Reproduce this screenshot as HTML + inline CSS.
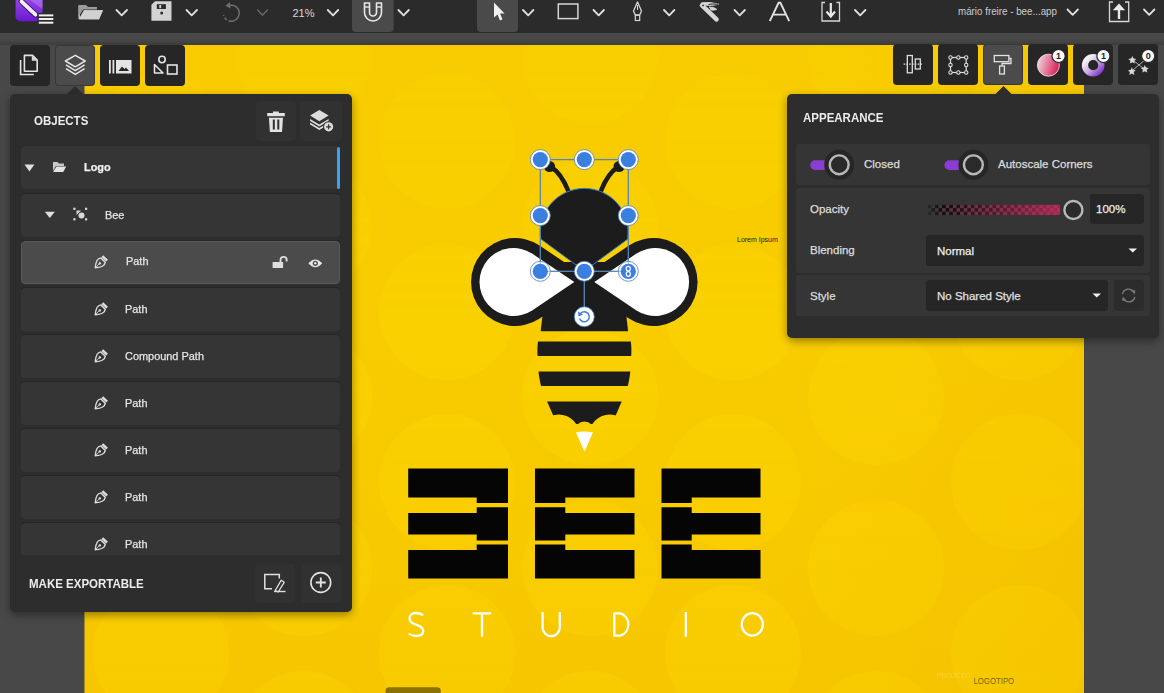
<!DOCTYPE html>
<html><head><meta charset="utf-8">
<style>
*{margin:0;padding:0;box-sizing:border-box}
html,body{width:1164px;height:693px;overflow:hidden;background:#484848;font-family:"Liberation Sans",sans-serif;position:relative}
.abs{position:absolute}
#toolbar{left:0;top:0;width:1164px;height:33px;background:#2b2b2b}
#canvas{left:84.5px;top:45px;width:999px;height:649px;background:#f6c800;overflow:hidden}
svg{position:absolute;left:0;top:0}
.panel{background:#2d2d2d;border-radius:5px;box-shadow:0 3px 9px rgba(0,0,0,.4)}
.btn{width:40px;height:41px;background:#262626;border-radius:4px}
.btn.on{background:#4b4b4b;box-shadow:inset 0 0 0 1px rgba(0,0,0,.25)}
.row{left:21px;width:319px;height:43px;background:#353535;box-shadow:0 -1px 0 #262626;border-radius:4px;color:#e6e6e6;font-size:11.5px}
.row span{position:absolute;top:15px;transform:scaleX(.95);transform-origin:0 0;white-space:nowrap;-webkit-text-stroke:.25px currentColor}
.hdr{color:#ececec;font-weight:bold;font-size:12.5px;transform:scaleX(.92);transform-origin:0 0;white-space:nowrap}
.lbl{color:#dedede;font-size:11.5px;white-space:nowrap;-webkit-text-stroke:.25px currentColor}
</style></head><body>

<div class="abs" style="left:0;top:33px;width:1164px;height:12px;background:linear-gradient(#4a4a4a,#474747 60%,#3c3c3c)"></div>
<div id="toolbar" class="abs"></div>
<div id="canvas" class="abs"></div>

<!-- canvas art, page coordinates -->
<svg width="1164" height="693" viewBox="0 0 1164 693">
  <defs>
    <clipPath id="cv"><rect x="84.5" y="45" width="999.5" height="649"/></clipPath>
    <clipPath id="bodyc"><ellipse cx="584.5" cy="350" rx="47" ry="88"/></clipPath>
  </defs>
  <g clip-path="url(#cv)">
    <!-- bokeh -->
    <defs>
      <linearGradient id="vig" x1="0" y1="0" x2="1" y2="0">
        <stop offset="0" stop-color="#e8a800" stop-opacity="0.0"/>
        <stop offset="0.7" stop-color="#e8a800" stop-opacity="0.0"/>
        <stop offset="1" stop-color="#e8a800" stop-opacity="0.14"/>
      </linearGradient>
      <linearGradient id="bokg" x1="0" y1="0" x2="0" y2="1">
        <stop offset="0" stop-color="#fff" stop-opacity=".45"/>
        <stop offset=".5" stop-color="#fff" stop-opacity=".8"/>
        <stop offset="1" stop-color="#fff" stop-opacity="1"/>
      </linearGradient>
      <mask id="bokm" maskUnits="userSpaceOnUse" x="84" y="44" width="1000" height="649"><rect x="84" y="44" width="1000" height="649" fill="url(#bokg)"/></mask>
      <linearGradient id="vig2" x1="0" y1="0" x2="0" y2="1">
        <stop offset="0" stop-color="#e8a000" stop-opacity="0"/>
        <stop offset="0.45" stop-color="#e8a000" stop-opacity="0"/>
        <stop offset="1" stop-color="#e8a000" stop-opacity="0.12"/>
      </linearGradient>
    </defs>
    <rect x="84" y="44" width="1000" height="649" fill="#f8cc00"/>
    <g fill="#fad100" mask="url(#bokm)"><circle cx="161" cy="141" r="68"/><circle cx="161" cy="312" r="68"/><circle cx="161" cy="482" r="68"/><circle cx="161" cy="653" r="68"/><circle cx="447" cy="141" r="68"/><circle cx="447" cy="312" r="68"/><circle cx="447" cy="482" r="68"/><circle cx="447" cy="653" r="68"/><circle cx="733" cy="141" r="68"/><circle cx="733" cy="312" r="68"/><circle cx="733" cy="482" r="68"/><circle cx="733" cy="653" r="68"/><circle cx="1019" cy="141" r="68"/><circle cx="1019" cy="312" r="68"/><circle cx="1019" cy="482" r="68"/><circle cx="1019" cy="653" r="68"/><circle cx="18" cy="56" r="68"/><circle cx="18" cy="227" r="68"/><circle cx="18" cy="397" r="68"/><circle cx="18" cy="568" r="68"/><circle cx="18" cy="739" r="68"/><circle cx="304" cy="56" r="68"/><circle cx="304" cy="227" r="68"/><circle cx="304" cy="397" r="68"/><circle cx="304" cy="568" r="68"/><circle cx="304" cy="739" r="68"/><circle cx="590" cy="56" r="68"/><circle cx="590" cy="227" r="68"/><circle cx="590" cy="397" r="68"/><circle cx="590" cy="568" r="68"/><circle cx="590" cy="739" r="68"/><circle cx="876" cy="56" r="68"/><circle cx="876" cy="227" r="68"/><circle cx="876" cy="397" r="68"/><circle cx="876" cy="568" r="68"/><circle cx="876" cy="739" r="68"/></g>
    <rect x="84" y="44" width="1000" height="649" fill="url(#vig)"/>
    <rect x="84" y="44" width="1000" height="649" fill="url(#vig2)"/>
    <!-- BEE letters -->
    <path fill="#050505" d="M408.2,468.5 H508.0 V503 H476.7 V497.5 H408.2 Z M476.7,507.3 H508.0 V540.6 H476.7 V534.5 H408.2 V513 H476.7 Z M476.7,544.4 H508.0 V578.5 H408.2 V550 H476.7 Z M535,468.5 H634.5 V497.5 H565.3 V503 H535 Z M535,507.3 H565.3 V513 H634.5 V534.5 H565.3 V540.6 H535 Z M535,544.4 H565.3 V550 H634.5 V578.5 H535 Z M661.5,468.5 H760.5 V497.5 H691.7 V503 H661.5 Z M661.5,507.3 H691.7 V513 H760.5 V534.5 H691.7 V540.6 H661.5 Z M661.5,544.4 H691.7 V550 H760.5 V578.5 H661.5 Z "/>
    <!-- STUDIO -->
    <g fill="none" stroke="#fff" stroke-width="2.3">
      <path d="M423,615.5 C421,613.5 418.5,613 416,613 C411.5,613 409.5,615.8 409.5,618.5 C409.5,622.5 413,623.8 416.5,624.8 C420.5,626 423.2,627.5 423.2,631 C423.2,634.5 420.3,636 416,636 C413,636 410.5,635 408.8,633.5"/>
      <path d="M472.7,613.3 H491.2 M482,613.3 V636.7"/>
      <path d="M542.6,612 V627.5 A8.6,8.6 0 0 0 559.8,627.5 V612"/>
      <path d="M614.3,613.4 H620.5 A11.5,11.7 0 0 1 620.5,635.6 H614.3 Z"/>
      <path d="M685.8,612 V636.7"/>
      <ellipse cx="752.3" cy="624.4" rx="10.6" ry="11.2"/>
    </g>
    <!-- bee body -->
    <defs>
      <mask id="scal" maskUnits="userSpaceOnUse" x="530" y="395" width="110" height="40">
        <rect x="530" y="395" width="110" height="40" fill="#fff"/>
        <circle cx="558.75" cy="435" r="20.6" fill="#000"/>
        <circle cx="609.85" cy="435" r="20.6" fill="#000"/>
        <circle cx="584.4" cy="431.6" r="10" fill="#000"/>
      </mask>
    </defs>
    <g fill="#1c1c1c">
      <path d="M548.5,262 H620.3 L628.1,331.2 H540.7 Z"/>
      <path d="M538,341.6 C537.3,347 537.3,351 537.6,355.9 H631.2 C631.5,351 631.5,347 630.8,341.6 Z"/>
      <path d="M538.5,371.6 C539,377 539.8,381 541,385.9 H627.8 C629,381 629.8,377 630.3,371.6 Z"/>
      <path mask="url(#scal)" d="M547.1,401.6 H621.7 L612,424 H557 Z"/>
    </g>
    <path fill="#fff" d="M575.9,432.3 Q584.5,430.8 593,432.3 L585.3,450 Q584.5,451.5 583.7,450 Z"/>
    <!-- wings -->
    <g fill="#1c1c1c">
      <path d="M593.7,282 L539.6,245.5 A44,44 0 1 0 539.6,318.5 Z"/>
      <path d="M574.9,282 L629,245.5 A44,44 0 1 1 629,318.5 Z"/>
    </g>
    <g fill="#fff">
      <path d="M574.3,282 L532.5,253.8 A34,34 0 1 0 532.5,310.2 Z"/>
      <path d="M594.3,282 L636.1,253.8 A34,34 0 1 1 636.1,310.2 Z"/>
    </g>
    <!-- head -->
    <g stroke="#1c1c1c" stroke-width="4.6" fill="none" stroke-linecap="round">
      <path d="M568.3,191 Q561,173 551,167"/>
      <path d="M600.9,191 Q608,173 618,167"/>
    </g>
    <circle cx="549.5" cy="166.5" r="5.6" fill="#1c1c1c"/>
    <circle cx="619.1" cy="166.5" r="5.6" fill="#1c1c1c"/>
    <path fill="#1c1c1c" stroke="#3b78c8" stroke-width="1" d="M540.8,239 A44,44 0 1 1 627.8,239 L584.3,271 Z"/>
    <!-- selection -->
    <g stroke="#5a86b0" stroke-width="1.3" fill="none">
      <rect x="540.3" y="159.6" width="88" height="111.7"/>
      <line x1="584.3" y1="271.3" x2="584.3" y2="316.7"/>
    </g>
    <g>
      <g fill="#fff" stroke="#4a7fc0" stroke-width="0.8">
        <circle cx="540.3" cy="159.6" r="10"/>
        <circle cx="584.3" cy="159.6" r="10"/>
        <circle cx="628.3" cy="159.6" r="10"/>
        <circle cx="540.3" cy="215.6" r="10"/>
        <circle cx="628.3" cy="215.6" r="10"/>
        <circle cx="584.3" cy="271.3" r="10"/>
        <circle cx="584.3" cy="316.7" r="10"/>
      </g>
      <g fill="#fff" fill-opacity=".55" stroke="#4a7fc0" stroke-width="0.8">
        <circle cx="540.3" cy="271.3" r="10"/>
        <circle cx="628.3" cy="271.3" r="10"/>
      </g>
      <g fill="#3b7fe0">
        <circle cx="540.3" cy="159.6" r="7.6"/>
        <circle cx="584.3" cy="159.6" r="7.6"/>
        <circle cx="628.3" cy="159.6" r="7.6"/>
        <circle cx="540.3" cy="215.6" r="7.6"/>
        <circle cx="628.3" cy="215.6" r="7.6"/>
        <circle cx="584.3" cy="271.3" r="7.6"/>
        <circle cx="540.3" cy="271.3" r="7.6"/>
        <circle cx="628.3" cy="271.3" r="7.6"/>
      </g>
    </g>
    <g fill="none" stroke="#3b7fe0" stroke-width="1.5">
      <path d="M580.5,313.5 A5,5 0 1 1 579.6,318.5"/>
    </g>
    <path d="M578,311.5 L578.5,316.5 L583,314.5 Z" fill="#3b7fe0"/>
    <g fill="none" stroke="#fff" stroke-width="1.2">
      <rect x="626.3" y="266.3" width="4" height="4.6" rx="2"/>
      <rect x="626.3" y="271.7" width="4" height="4.6" rx="2"/>
    </g>
    <text x="936.5" y="678.5" font-size="8" fill="#fbe070" font-family="Liberation Sans" opacity=".45" transform="translate(936.5 0) scale(.9 1) translate(-936.5 0)">PROJETO</text>
    <text x="973.5" y="684.3" font-size="8.2" fill="#76661c" font-family="Liberation Sans" transform="translate(973.5 0) scale(.95 1) translate(-973.5 0)">LOGOTIPO</text>
    <path d="M385.5,693 V691 Q385.5,687.3 389.5,687.3 H436.8 Q440.8,687.3 440.8,691 V693 Z" fill="#4a3c00" opacity=".62"/>
    <text x="737" y="242" font-size="7" fill="#222" font-family="Liberation Sans">Lorem Ipsum</text>
  </g>
</svg>


<!-- ===== TOOLBAR ICONS ===== -->
<svg width="1164" height="40" viewBox="0 0 1164 40" style="z-index:2">
  <!-- app icon -->
  <defs>
    <linearGradient id="appg" x1="0" y1="0" x2="0" y2="1">
      <stop offset="0" stop-color="#a050e8"/><stop offset="1" stop-color="#6a1ad0"/>
    </linearGradient>
  </defs>
  <rect x="15.6" y="-6" width="26.9" height="27.2" rx="5" fill="url(#appg)"/>
  <path d="M27,-2 H42.5 V9 Z" fill="#b27cf2" opacity=".55"/>
  <path d="M21.5,1.5 L35.5,14.7" stroke="#3a0c6a" stroke-width="5.6" stroke-linecap="round"/>
  <path d="M21.5,1.5 L35.5,14.7" stroke="#f4eefa" stroke-width="3.8" stroke-linecap="round"/>
  <rect x="37.3" y="13" width="18" height="12" fill="#2b2b2b"/>
  <g fill="#f0f0f0"><rect x="38.8" y="14.4" width="14.5" height="2"/><rect x="38.8" y="18" width="14.5" height="2"/><rect x="38.8" y="21.7" width="14.5" height="2"/></g>
  <!-- folder -->
  <path d="M78.5,6 L78.5,19 L99,19 L103,10 L84,10 L80,17 L80,6 Z" fill="#bdbdbd"/>
  <path d="M78.5,5 L86,5 L88,7 L97,7 L97,9.5 L83,9.5 L78.5,17 Z" fill="#9c9c9c"/>
  <path d="M84,10.5 L103,10.5 L99,19.5 L79,19.5 Z" fill="#d0d0d0"/>
  <!-- chevrons -->
  <g fill="none" stroke="#e0e0e0" stroke-width="1.8" stroke-linecap="round" stroke-linejoin="round">
    <path d="M116.5,10 L121.7,15.3 L127,10"/>
    <path d="M186.5,10 L191.7,15.3 L197,10"/>
    <path d="M327.8,10 L333,15.3 L338.2,10"/>
    <path d="M398.4,10 L403.6,15.3 L408.8,10"/>
    <path d="M523,10 L528.2,15.3 L533.4,10"/>
    <path d="M593.5,10 L598.7,15.3 L603.9,10"/>
    <path d="M664,10 L669.2,15.3 L674.4,10"/>
    <path d="M734.5,10 L739.7,15.3 L744.9,10"/>
    <path d="M855,10 L860.2,15.3 L865.4,10"/>
    <path d="M1067.5,9.5 L1072.7,14.8 L1077.9,9.5"/>
    <path d="M1144,9.5 L1149.2,14.8 L1154.4,9.5"/>
  </g>
  <path d="M257.6,10 L262.5,15 L267.4,10" fill="none" stroke="#6a6a6a" stroke-width="1.4" stroke-linecap="round"/>
  <!-- save -->
  <path d="M155,1.2 H171.5 V20.7 H151.4 V4.8 Z" fill="#d2d2d2"/>
  <rect x="156.8" y="4.2" width="9.1" height="4.8" fill="#2b2b2b"/>
  <rect x="159.3" y="5" width="1.8" height="3.2" fill="#d2d2d2"/>
  <circle cx="161.7" cy="13" r="1.5" fill="#2b2b2b"/>
  <!-- undo (dim) -->
  <path d="M229,5.5 A8,8 0 1 1 223.5,15" fill="none" stroke="#6e6e6e" stroke-width="1.5" stroke-dasharray="30 2 3 2 3"/>
  <path d="M230,2 L225.5,5.8 L230.5,8.5 Z" fill="#6e6e6e"/>
  <text x="292.5" y="17.3" font-size="11" fill="#d8d8d8" font-family="Liberation Sans">21%</text>
  <!-- magnet button -->
  <path d="M352,0 L393.6,0 L393.6,28 Q393.6,32 389.6,32 L356,32 Q352,32 352,28 Z" fill="#4a4a4a"/>
  <path d="M364.5,3 L364.5,12.5 A8.5,8.5 0 0 0 381.5,12.5 L381.5,3 L376.5,3 L376.5,12.5 A3.5,3.5 0 0 1 369.5,12.5 L369.5,3 Z" fill="none" stroke="#e8e8e8" stroke-width="1.6" stroke-linejoin="round"/>
  <line x1="364.5" y1="7" x2="369.5" y2="7" stroke="#e8e8e8" stroke-width="1.4"/>
  <line x1="376.5" y1="7" x2="381.5" y2="7" stroke="#e8e8e8" stroke-width="1.4"/>
  <!-- move tool button -->
  <path d="M477,0 L518,0 L518,28 Q518,32 514,32 L481,32 Q477,32 477,28 Z" fill="#4a4a4a"/>
  <path d="M494,2.5 L494,17.5 L497.5,14.5 L500,20.5 L502.5,19.3 L500,13.5 L504.5,13.5 Z" fill="#f0f0f0"/>
  <!-- rectangle -->
  <rect x="558.3" y="4" width="19.6" height="14.6" fill="none" stroke="#d6d6d6" stroke-width="1.5"/>
  <!-- pen -->
  <path d="M637.5,2 L641.5,11 L639.8,14.8 L635.2,14.8 L633.5,11 Z" fill="none" stroke="#d6d6d6" stroke-width="1.3" stroke-linejoin="round"/>
  <line x1="637.5" y1="5" x2="637.5" y2="10" stroke="#d6d6d6" stroke-width="1"/>
  <rect x="635.3" y="15.3" width="4.4" height="5.2" fill="none" stroke="#d6d6d6" stroke-width="1.2"/>
  <!-- brush -->
  <path d="M702,5.3 L716.5,19.3" stroke="#d6d6d6" stroke-width="4.6" stroke-linecap="round"/>
  <circle cx="703" cy="5.4" r="0.9" fill="#2b2b2b"/>
  <path d="M701.5,2.8 Q710,1.5 719,4.3 Q711,6.2 704.5,5" fill="#d6d6d6" stroke="#d6d6d6" stroke-width="1"/>
  <path d="M708.5,4.5 Q711,3.6 718.5,4.3" fill="none" stroke="#2b2b2b" stroke-width="1"/>
  <path d="M709,7 Q714,6.8 716.8,9.4 Q713,10.8 710.5,9.8" fill="#d6d6d6" stroke="#d6d6d6" stroke-width="0.9"/>
  <!-- text A -->
  <path d="M769.8,21.2 L778.6,2.8 L780.4,2.8 L789.2,21.2 M773.3,14.6 L785.7,14.6" fill="none" stroke="#e2e2e2" stroke-width="1.9"/>
  <!-- import -->
  <path d="M825,2.5 L822,2.5 L822,21 L839.5,21 L839.5,2.5 L836.5,2.5" fill="none" stroke="#d6d6d6" stroke-width="1.3"/>
  <path d="M830.8,3 L830.8,15" stroke="#eaeaea" stroke-width="2.2"/>
  <path d="M826.5,11.5 L830.8,16.5 L835,11.5" fill="none" stroke="#eaeaea" stroke-width="2.2"/>
  <text x="958" y="15" font-size="11" fill="#cfcfcf" font-family="Liberation Sans" transform="translate(958 0) scale(.89 1) translate(-958 0)">mário freire - bee...app</text>
  <!-- export -->
  <path d="M1113,2 L1109.5,2 L1109.5,21.5 L1128.7,21.5 L1128.7,2 L1125,2" fill="none" stroke="#d6d6d6" stroke-width="1.3"/>
  <path d="M1119,7 L1119,19" stroke="#eaeaea" stroke-width="2.4"/>
  <path d="M1114.5,9.5 L1119,4.5 L1123.5,9.5 Z" fill="#eaeaea" stroke="#eaeaea" stroke-width="1.4"/>
</svg>


<!-- ===== LEFT TOOL BUTTONS ===== -->
<div class="abs btn" style="left:10px;top:45px"></div>
<div class="abs btn on" style="left:55px;top:45px"></div>
<div class="abs btn" style="left:100px;top:45px"></div>
<div class="abs btn" style="left:145px;top:45px"></div>
<svg width="200" height="100" viewBox="0 0 200 100" style="z-index:3">
  <!-- pages icon -->
  <path d="M20.6,60 V74.5 H33.8" fill="none" stroke="#e4e4e4" stroke-width="1.6"/>
  <path d="M24.4,55.4 H32.5 L37.2,60.1 V71.2 H24.4 Z" fill="none" stroke="#e4e4e4" stroke-width="1.6" stroke-linejoin="round"/>
  <path d="M31.8,55.4 L37.2,60.8 H31.8 Z" fill="#dcdcdc"/>
  <!-- layers -->
  <g fill="none" stroke="#e6e6e6" stroke-width="1.5" stroke-linejoin="round">
    <path d="M75.3,55.3 L85.2,61 L75.3,66.8 L65.4,61 Z"/>
    <path d="M66,64.9 L75.3,70.6 L84.6,64.9"/>
    <path d="M66,68.7 L75.3,74.4 L84.6,68.7"/>
  </g>
  <!-- assets -->
  <g fill="#e4e4e4">
    <rect x="109" y="60" width="1.8" height="13.5"/>
    <rect x="112.5" y="60" width="1.8" height="13.5"/>
    <rect x="116" y="60" width="15.5" height="13.5"/>
  </g>
  <path d="M118.5,71 L122,66.5 L124.5,69 L126,67.5 L129,71 Z" fill="#262626"/>
  <!-- shapes -->
  <g fill="none" stroke="#e4e4e4" stroke-width="1.6">
    <circle cx="162" cy="59.5" r="3.2"/>
    <path d="M154.5,73 L154.5,64.5 L163,73 Z" stroke-linejoin="round"/>
    <rect x="167.5" y="65" width="9.5" height="9"/>
  </g>
  <!-- pointer -->
  <path d="M67,94 L75,86 L83,94 Z" fill="#2d2d2d"/>
</svg>

<!-- ===== OBJECTS PANEL ===== -->
<div class="abs panel" style="left:10px;top:94px;width:342px;height:518px;z-index:3">
  <div class="abs hdr" style="left:24px;top:20px">OBJECTS</div>
  <div class="abs" style="left:246px;top:7px;width:40px;height:40px;background:#313131;border-radius:4px"></div>
  <div class="abs" style="left:290px;top:7px;width:42px;height:40px;background:#313131;border-radius:4px"></div>
  <div class="abs" style="left:11px;top:52px;width:320px;height:409px;overflow:hidden">
    <div class="abs row" style="left:0;top:0"><span style="left:63px;font-weight:bold;color:#f0f0f0">Logo</span></div>
    <div class="abs" style="left:315.5px;top:1px;width:3.5px;height:42px;background:#3aa0f0;border-radius:2px"></div>
    <div class="abs row" style="left:0;top:48px"><span style="left:84px">Bee</span></div>
    <div class="abs row" style="left:0;top:95px;background:#4b4b4b;border:1px solid #5a5a5a"><span style="left:104px;top:13px">Path</span></div>
    <div class="abs row" style="left:0;top:142px"><span style="left:104px">Path</span></div>
    <div class="abs row" style="left:0;top:189px"><span style="left:104px">Compound Path</span></div>
    <div class="abs row" style="left:0;top:236px"><span style="left:104px">Path</span></div>
    <div class="abs row" style="left:0;top:283px"><span style="left:104px">Path</span></div>
    <div class="abs row" style="left:0;top:330px"><span style="left:104px">Path</span></div>
    <div class="abs row" style="left:0;top:377px"><span style="left:104px">Path</span></div>
  </div>
  <div class="abs hdr" style="left:19px;top:483px">MAKE EXPORTABLE</div>
  <div class="abs" style="left:245px;top:470px;width:40px;height:39px;background:#313131;border-radius:4px"></div>
  <div class="abs" style="left:291px;top:470px;width:40px;height:39px;background:#313131;border-radius:4px"></div>
</div>

<!-- ===== RIGHT TOOL BUTTONS ===== -->
<div class="abs btn" style="left:893px;top:44px"></div>
<div class="abs btn" style="left:938px;top:44px"></div>
<div class="abs btn on" style="left:983px;top:44px"></div>
<div class="abs btn" style="left:1028px;top:44px"></div>
<div class="abs btn" style="left:1073px;top:44px"></div>
<div class="abs btn" style="left:1118px;top:44px"></div>

<!-- ===== APPEARANCE PANEL ===== -->
<div class="abs panel" style="left:787px;top:94px;width:372px;height:244px;z-index:3">
  <div class="abs hdr" style="left:16px;top:17px">APPEARANCE</div>
  <div class="abs" style="left:9px;top:50px;width:354px;height:41px;background:#353535;border-radius:3px"></div>
  <div class="abs" style="left:9px;top:94px;width:354px;height:84.5px;background:#353535;border-radius:3px"></div>
  <div class="abs" style="left:9px;top:181px;width:354px;height:40.5px;background:#353535;border-radius:3px"></div>
  <div class="abs lbl" style="left:77px;top:64px">Closed</div>
  <div class="abs lbl" style="left:211px;top:64px">Autoscale Corners</div>
  <div class="abs lbl" style="left:23px;top:109px">Opacity</div>
  <div class="abs lbl" style="left:23px;top:150px">Blending</div>
  <div class="abs lbl" style="left:23px;top:196px">Style</div>
  <div class="abs" style="left:303px;top:100px;width:54px;height:30px;background:#262626;border-radius:3px"></div>
  <div class="abs lbl" style="left:309px;top:109px;color:#ececec">100%</div>
  <div class="abs" style="left:139px;top:141px;width:218px;height:31px;background:#262626;border-radius:3px"></div>
  <div class="abs lbl" style="left:150px;top:150.5px;color:#f0f0f0">Normal</div>
  <div class="abs" style="left:139px;top:186px;width:182px;height:31px;background:#262626;border-radius:3px"></div>
  <div class="abs lbl" style="left:150px;top:196px;color:#e0e0e0">No Shared Style</div>
  <div class="abs" style="left:327px;top:186px;width:30px;height:31px;background:#2c2c2c;border-radius:3px"></div>
</div>
<svg width="1164" height="693" viewBox="0 0 1164 693" style="z-index:4;pointer-events:none">
  <path d="M995.5,94 L1003.5,86 L1011.5,94 Z" fill="#2d2d2d"/>
</svg>


<!-- ===== PANEL ICON OVERLAY ===== -->
<svg width="1164" height="693" viewBox="0 0 1164 693" style="z-index:5;pointer-events:none">
  <defs>
    <linearGradient id="fillg" x1="0" y1="0" x2="1" y2="0.3">
      <stop offset="0" stop-color="#f2e4e8"/><stop offset="1" stop-color="#d92a5e"/>
    </linearGradient>
    <linearGradient id="strokeg" x1="0" y1="0" x2="1" y2="1">
      <stop offset="0.15" stop-color="#f2eef6"/><stop offset=".55" stop-color="#c9a8e4"/><stop offset="1" stop-color="#7a30c8"/>
    </linearGradient>
    <linearGradient id="opg" x1="0" y1="0" x2="1" y2="0">
      <stop offset="0" stop-color="#c2305c" stop-opacity="0"/><stop offset="1" stop-color="#c8305e" stop-opacity=".82"/>
    </linearGradient>
    <pattern id="chk" width="7.2" height="7.2" patternUnits="userSpaceOnUse" x="927.7" y="204.5">
      <rect width="7.2" height="7.2" fill="#3a3a3a"/>
      <rect width="3.6" height="3.6" fill="#050505"/>
      <rect x="3.6" y="3.6" width="3.6" height="3.6" fill="#050505"/>
    </pattern>
    <linearGradient id="fadeg" x1="0" y1="0" x2="1" y2="0">
      <stop offset="0" stop-color="#fff" stop-opacity=".25"/><stop offset=".12" stop-color="#fff" stop-opacity="1"/><stop offset="1" stop-color="#fff"/>
    </linearGradient>
    <mask id="fadem" maskUnits="userSpaceOnUse" x="927" y="204" width="134" height="12"><rect x="927.7" y="204.5" width="132.6" height="10.6" fill="url(#fadeg)"/></mask>
  </defs>

  <!-- trash -->
  <g fill="#e2e2e2">
    <rect x="267.2" y="113" width="17.6" height="3.2"/>
    <rect x="273" y="111.5" width="5.8" height="2"/>
    <path d="M268.9,117.8 H283 L282,132 H269.9 Z"/>
  </g>
  <g fill="#313131"><rect x="272.8" y="119.5" width="2" height="10"/><rect x="277.3" y="119.5" width="2" height="10"/></g>
  <!-- add layer -->
  <g fill="#dcdcdc">
    <path d="M319.3,110 L328.6,115.6 L319.3,121.2 L310.1,115.6 Z"/>
    <path d="M310.1,119 L319.3,124.6 L328.6,119 L328.6,121 L319.3,126.6 L310.1,121 Z"/>
    <path d="M310.1,122.4 L319.3,128 L328.6,122.4 L328.6,124.4 L319.3,130 L310.1,124.4 Z"/>
  </g>
  <circle cx="328.6" cy="126.8" r="5.6" fill="#313131"/>
  <circle cx="328.6" cy="126.8" r="4.6" fill="#dcdcdc"/>
  <path d="M328.6,124.3 V129.3 M326.1,126.8 H331.1" stroke="#313131" stroke-width="1.2"/>

  <!-- row icons -->
  <g fill="#dedede">
    <path d="M24.5,164.4 H34.4 L29.45,171.4 Z"/>
    <path d="M44.8,211.8 H54.8 L49.8,218.1 Z"/>
  </g>
  <!-- folder -->
  <path d="M53,162 H57.5 L59,163.5 H64 V166 H56 L53,171 Z" fill="#c8c8c8"/>
  <path d="M56.5,166.5 H66.2 L63.2,172 H53.2 Z" fill="#e4e4e4"/>
  <!-- group icon -->
  <g fill="#d8d8d8">
    <rect x="73.3" y="207.7" width="2.2" height="2.2"/><rect x="85" y="207.7" width="2.2" height="2.2"/>
    <rect x="73.3" y="218.2" width="2.2" height="2.2"/><rect x="85" y="218.2" width="2.2" height="2.2"/>
    <path d="M76.5,210.5 H81 L76.5,215 Z"/>
    <circle cx="81.5" cy="215.5" r="3"/>
  </g>
  <!-- pen icons -->
  <g id="pen" transform="translate(100.5,262.6) rotate(45)">
    <path d="M-3.1,-3.6 C-5.2,-1 -4.6,2.2 0,7.4 C4.6,2.2 5.2,-1 3.1,-3.6 Z" fill="none" stroke="#dcdcdc" stroke-width="1.45" stroke-linejoin="round"/>
    <rect x="-3.3" y="-7.2" width="6.6" height="2.5" fill="#dcdcdc"/>
    <circle cx="0" cy="1" r="1.25" fill="#dcdcdc"/>
    <path d="M0,1 V7" stroke="#dcdcdc" stroke-width="0.8"/>
  </g>
  <use href="#pen" y="47"/>
  <use href="#pen" y="94"/>
  <use href="#pen" y="141"/>
  <use href="#pen" y="188"/>
  <use href="#pen" y="235"/>
  <use href="#pen" y="282"/>
  <!-- lock open -->
  <rect x="272.6" y="262" width="10.5" height="6" fill="#dedede" rx="0.6"/>
  <path d="M280.5,262 V260 A3.1,3.1 0 0 1 286.7,260 V261.5" fill="none" stroke="#dedede" stroke-width="1.8"/>
  <!-- eye -->
  <path d="M308.4,263.3 Q315.3,255.5 322.2,263.3 Q315.3,271.1 308.4,263.3 Z" fill="#e8e8e8"/>
  <circle cx="315.3" cy="263.3" r="2.6" fill="#4b4b4b"/>
  <circle cx="315.3" cy="263.3" r="1.2" fill="#e8e8e8"/>

  <!-- footer icons -->
  <path d="M272,588.8 H264.8 V574.4 H279.3 V578.5" fill="none" stroke="#e0e0e0" stroke-width="1.5"/>
  <path d="M275.2,590.5 L281.3,580.2 L284.3,582.2 L278.2,592 Z" fill="none" stroke="#e0e0e0" stroke-width="1.3" stroke-linejoin="round"/>
  <path d="M274,591.5 H285.5" stroke="#e0e0e0" stroke-width="1.4"/>
  <circle cx="320.8" cy="582.5" r="9.9" fill="none" stroke="#e4e4e4" stroke-width="1.6"/>
  <path d="M320.8,577.5 V587.5 M315.8,582.5 H325.8" stroke="#e4e4e4" stroke-width="1.8"/>

  <!-- right toolbar icons -->
  <g fill="none" stroke="#dedede" stroke-width="1.3">
    <rect x="907.3" y="55.5" width="5" height="17.3"/>
    <rect x="915.3" y="59" width="5" height="10"/>
    <path d="M903.6,64.1 H923.2" stroke-dasharray="1.6 1.2"/>
  </g>
  <g fill="none" stroke="#dedede" stroke-width="1.2">
    <rect x="950.5" y="57.5" width="15.7" height="15"/>
  </g>
  <g fill="#262626" stroke="#dedede" stroke-width="1.1">
    <circle cx="950.5" cy="57.5" r="1.7"/><circle cx="958.35" cy="57.5" r="1.7"/><circle cx="966.2" cy="57.5" r="1.7"/>
    <circle cx="950.5" cy="65" r="1.7"/><circle cx="966.2" cy="65" r="1.7"/>
    <circle cx="950.5" cy="72.5" r="1.7"/><circle cx="958.35" cy="72.5" r="1.7"/><circle cx="966.2" cy="72.5" r="1.7"/>
  </g>
  <g fill="none" stroke="#e2e2e2" stroke-width="1.3">
    <rect x="994.3" y="55.5" width="14.6" height="6.2"/>
    <path d="M1009,58.5 H1011 V63.5 H1002 V66"/>
    <rect x="999.6" y="66" width="4.8" height="8"/>
  </g>
  <circle cx="1048.4" cy="65.2" r="11" fill="url(#fillg)" stroke="#f0e8ea" stroke-width=".8"/>
  <circle cx="1093.2" cy="65.2" r="8.2" fill="none" stroke="url(#strokeg)" stroke-width="6.2"/>
  <g fill="#d8d8d8">
    <path d="M1132.3,56 l1.2,2.6 2.8,.3 -2.1,1.9 .6,2.8 -2.5,-1.4 -2.5,1.4 .6,-2.8 -2.1,-1.9 2.8,-.3 z"/>
    <path d="M1131.8,67.3 l1.2,2.6 2.8,.3 -2.1,1.9 .6,2.8 -2.5,-1.4 -2.5,1.4 .6,-2.8 -2.1,-1.9 2.8,-.3 z"/>
    <path d="M1144.8,65 l1.2,2.6 2.8,.3 -2.1,1.9 .6,2.8 -2.5,-1.4 -2.5,1.4 .6,-2.8 -2.1,-1.9 2.8,-.3 z"/>
  </g>
  <path d="M1134,61 L1143,68 M1133,70 L1146,59" stroke="#cfcfcf" stroke-width="0.8"/>
  <g>
    <circle cx="1058.6" cy="56" r="6.6" fill="#fafafa" stroke="#262626" stroke-width="1.2"/>
    <circle cx="1103.4" cy="56" r="6.6" fill="#fafafa" stroke="#262626" stroke-width="1.2"/>
    <circle cx="1148.2" cy="56" r="6.6" fill="#fafafa" stroke="#262626" stroke-width="1.2"/>
  </g>
  <g font-family="Liberation Sans" font-size="9" font-weight="bold" fill="#222" text-anchor="middle">
    <text x="1058.6" y="59.3">1</text><text x="1103.4" y="59.3">1</text><text x="1148.2" y="59.3">0</text>
  </g>

  <!-- toggles -->
  <rect x="810.2" y="160.2" width="18" height="9.8" rx="4.9" fill="#8a3dd0"/>
  <circle cx="839.2" cy="164.8" r="15" fill="#262626"/>
  <circle cx="839.2" cy="164.8" r="9.4" fill="#2a2a2a" stroke="#b8b8b8" stroke-width="2.4"/>
  <rect x="944.4" y="160.2" width="18" height="9.8" rx="4.9" fill="#8a3dd0"/>
  <circle cx="973.4" cy="164.8" r="15" fill="#262626"/>
  <circle cx="973.4" cy="164.8" r="9.4" fill="#2a2a2a" stroke="#b8b8b8" stroke-width="2.4"/>
  <!-- opacity slider -->
  <g mask="url(#fadem)"><rect x="927.7" y="204.5" width="132.6" height="10.6" fill="url(#chk)"/>
  <rect x="927.7" y="204.5" width="132.6" height="10.6" fill="url(#opg)"/></g>
  <circle cx="1073.4" cy="210" r="9" fill="#2a2a2a" stroke="#b8b8b8" stroke-width="2.4"/>
  <!-- dropdown arrows -->
  <path d="M1128.5,248.5 H1137 L1132.75,252.5 Z" fill="#f0f0f0"/>
  <path d="M1092.5,293.5 H1101 L1096.75,297.5 Z" fill="#f0f0f0"/>
  <!-- refresh -->
  <g fill="none" stroke="#7a7a7a" stroke-width="1.4">
    <path d="M1122.5,294 A6,6 0 0 1 1133.5,292"/>
    <path d="M1134.8,297 A6,6 0 0 1 1123.8,299"/>
  </g>
  <path d="M1131,290 L1135.5,290.5 L1134.5,294.5 Z M1126.5,301 L1122,300.5 L1123,296.5 Z" fill="#7a7a7a"/>
</svg>

</body></html>
